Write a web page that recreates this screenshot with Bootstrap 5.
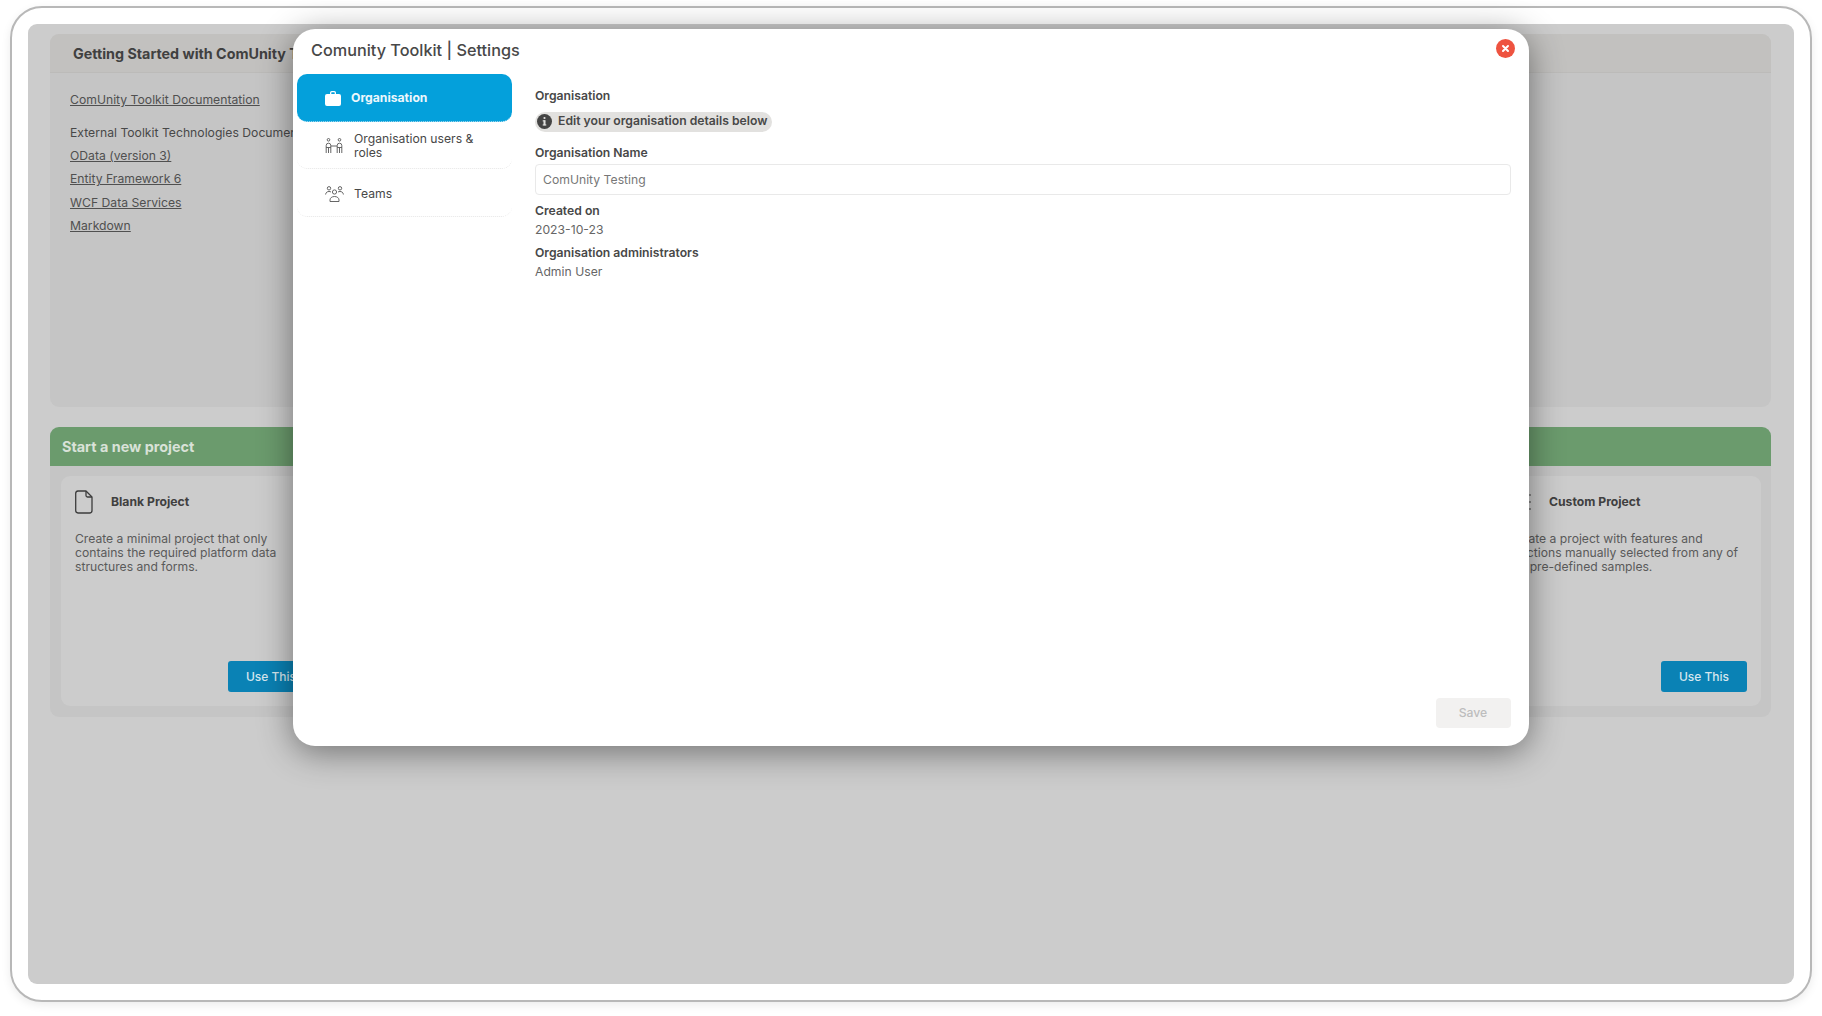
<!DOCTYPE html>
<html lang="en">
<head>
<meta charset="utf-8">
<title>Comunity Toolkit | Settings</title>
<link href="https://cdn.jsdelivr.net/npm/bootstrap@5.3.0/dist/css/bootstrap.min.css" rel="stylesheet">
<style>
html,body{height:100%;}
body{background:#fff;font-family:Inter,"Liberation Sans",sans-serif;color:#555;font-size:12.2px;overflow:hidden;}
.frame{position:relative;margin:6px 10px 0 10px;height:996px;border:2px solid #b8b8b8;border-radius:32px;padding:16px;background:#fff;box-shadow:0 3px 10px rgba(0,0,0,.08);}
.shell{background:#ccc;height:960px;border-radius:9px;padding:10px 23px 10px 22px;}
.panel{border-radius:9px;background:#c5c5c5;overflow:hidden;border:0;}
.panel-top{height:373px;}
.panel-top .phead{height:39px;background:#c2c1bf;border-bottom:1px solid #bcbbb9;padding:2px 23px 0;font-weight:700;font-size:14.3px;color:#404040;display:flex;align-items:center;}
.panel-top .pbody{padding:19px 20px 12px;}
.panel-top a{color:#505050;display:block;margin-bottom:7.4px;line-height:16px;text-decoration:underline;}
.panel-top p{color:#484848;margin:17px 0 7px;line-height:16px;}
.panel-new{height:290px;margin-top:20px;}
.panel-new .phead{height:39px;background:#6b9b6d;color:#d9e2d8;font-weight:700;font-size:14.4px;padding:0 12px;display:flex;align-items:center;}
.tiles{padding:10px 10px 10px 11px;display:flex;justify-content:space-between;}
.tile{width:267px;height:230px;background:#ccc;border-radius:9px;padding:14px;display:flex;flex-direction:column;}
.tile-head{display:flex;align-items:center;height:24px;font-weight:700;font-size:12.2px;color:#404040;}
.tile-ico{width:36px;flex:none;display:flex;}
.tile-ico.wide{width:41px;}
.tile p{margin:18px 0 0;line-height:14px;color:#5a5a5a;font-size:12.15px;}
.use-btn{background:#0a82b5;color:#d5e6ee;border:0;border-radius:3px;width:86px;height:31px;font-size:12px;font-weight:500;padding:0;}
.tile-foot{margin-top:auto;display:flex;justify-content:flex-end;}
.dialog{position:absolute;left:281px;top:21px;width:1236px;height:717px;background:#fff;border-radius:22px;box-shadow:0 6px 34px rgba(0,0,0,.45);}
.dlg-title{font-size:16.25px;font-weight:500;color:#484848;padding:10px 18px 0;height:45px;line-height:22px;}
.dlg-close{position:absolute;right:14px;top:10px;width:19px;height:19px;border-radius:50%;background:#ee5340;border:0;padding:0;display:flex;align-items:center;justify-content:center;}
.dlg-body{display:flex;}
.side{width:215px;margin-left:4px;flex:none;}
.side-item{display:flex;align-items:center;border-radius:10px;border-bottom:1px dotted #e6e6e6;color:#484848;line-height:14px;height:47.5px;padding-top:2px;}
.side-item.low{padding-top:4px;}
.side-item .sico{width:57px;padding-left:28px;flex:none;display:flex;}
.side-item .wrap-txt{width:125px;}
.side-item.on{background:#04a0db;color:#ecf7fc;font-weight:700;border-bottom-color:#bfe4f4;}
.side-item.on .sico{width:54px;padding-left:28px;}
.main{margin-left:23px;flex:1;padding-right:18.5px;padding-top:13.5px;}
.lbl{font-weight:600;color:#484848;line-height:16px;margin:0;}
.lbl-gap{margin-top:7px;}
.val{line-height:16px;color:#666;margin:3px 0 0;}
.pill{display:inline-flex;align-items:center;height:20px;background:#e2e1df;border-radius:10px;padding:0 5px 0 2px;margin:8px 0 13px;font-weight:600;color:#484848;vertical-align:top;}
.pill svg{margin-right:6px;}
.dlg-input.form-control{height:31px;border:1px solid #e9e9e9;border-radius:4px;font-size:12.2px;color:#666;padding:0 7px;margin-top:3px;margin-bottom:8px;}
.dlg-input.form-control::placeholder{color:#777;}
.save-btn{position:absolute;right:18.5px;bottom:18px;width:75px;height:30px;background:#f2f1f0;border:0;border-radius:4px;color:#bdbdbd;font-size:12.2px;font-weight:500;padding:0;}
</style>
</head>
<body>
<div class="frame">
  <div class="shell">
    <div class="panel panel-top">
      <div class="phead">Getting Started with ComUnity Toolkit</div>
      <div class="pbody">
        <a href="#">ComUnity Toolkit Documentation</a>
        <p>External Toolkit Technologies Documentation</p>
        <a href="#">OData (version 3)</a>
        <a href="#">Entity Framework 6</a>
        <a href="#">WCF Data Services</a>
        <a href="#">Markdown</a>
      </div>
    </div>
    <div class="panel panel-new">
      <div class="phead">Start a new project</div>
      <div class="tiles">
        <div class="tile">
          <div class="tile-head">
            <span class="tile-ico"><svg width="18" height="24" viewBox="0 0 18 24" fill="none" stroke="#3c3c3c" stroke-width="1.3" stroke-linejoin="round"><path d="M3 1h8l6 6v13.500a2.500 2.500 0 0 1-2.500 2.500H3A2.500 2.500 0 0 1 .7 20.500V3.500A2.500 2.500 0 0 1 3 1z"/><path d="M11 1v4.500a1.500 1.500 0 0 0 1.500 1.500H17"/></svg></span>
            Blank Project
          </div>
          <p>Create a minimal project that only contains the required platform data structures and forms.</p>
          <div class="tile-foot"><button class="use-btn" type="button">Use This</button></div>
        </div>
        <div class="tile">
          <div class="tile-head">
            <span class="tile-ico wide"><svg width="24" height="18" viewBox="0 0 24 18" fill="none" stroke="#444" stroke-width="1.200"><path d="M1 1h5v5H1zM1 11h5v5H1zM11 2h12M11 9h12M11 16h12"/></svg></span>
            Custom Project
          </div>
          <p>Create a project with features and functions manually selected from any of the pre-defined samples.</p>
          <div class="tile-foot"><button class="use-btn" type="button">Use This</button></div>
        </div>
      </div>
    </div>
  </div>

  <div class="dialog" role="dialog">
    <div class="dlg-title">Comunity Toolkit | Settings</div>
    <button class="dlg-close" type="button" aria-label="Close"><svg width="9" height="9" viewBox="0 0 9 9" stroke="#fff" stroke-width="2" stroke-linecap="round"><path d="M2 2l5 5M7 2L2 7"/></svg></button>
    <div class="dlg-body">
      <div class="side">
        <div class="side-item on">
          <span class="sico"><svg width="16" height="15" viewBox="0 0 16 15" fill="#fff"><path d="M5 3V1.800A1.800 1.800 0 0 1 6.800 0h2.400A1.800 1.800 0 0 1 11 1.800V3h3a2 2 0 0 1 2 2v8a2 2 0 0 1-2 2H2a2 2 0 0 1-2-2V5a2 2 0 0 1 2-2zm1.300 0h3.400V1.800a.5.500 0 0 0-.5-.5H6.800a.5.500 0 0 0-.5.5z"/></svg></span>
          Organisation
        </div>
        <div class="side-item">
          <span class="sico"><svg width="18" height="16" viewBox="0 0 18 16" fill="none" stroke="#555" stroke-width=".9"><circle cx="3.500" cy="1.800" r="1.300"/><circle cx="14.500" cy="1.800" r="1.300"/><path d="M1.200 15V7.500a2.300 2.300 0 0 1 4.600 0V15M3.500 10v5M16.800 15V7.500a2.300 2.300 0 0 0-4.600 0V15M14.500 10v5M5.800 8h6.400M1.200 9.500h4.600M12.200 9.500h4.600"/></svg></span>
          <span class="wrap-txt">Organisation users &amp; roles</span>
        </div>
        <div class="side-item low">
          <span class="sico"><svg width="19" height="16" viewBox="0 0 19 16" fill="none" stroke="#555" stroke-width=".9"><circle cx="4" cy="2.300" r="1.700"/><circle cx="15" cy="2.300" r="1.700"/><circle cx="9.500" cy="6" r="2.100"/><path d="M.6 8.500C.9 6.300 2.300 5.500 4 5.500c.8 0 1.400.1 2 .5M18.400 8.500c-.3-2.200-1.700-3-3.400-3-.8 0-1.400.1-2 .5M5 15.500v-1.500c0-2 1.800-3.500 4.500-3.500S14 12 14 14v1.500z"/></svg></span>
          Teams
        </div>
      </div>
      <div class="main">
        <p class="lbl">Organisation</p>
        <span class="pill"><svg width="15" height="15" viewBox="0 0 15 15"><circle cx="7.500" cy="7.500" r="7.500" fill="#444"/><rect x="6.500" y="6.300" width="2" height="5" fill="#e2e1df"/><rect x="5.700" y="6.300" width="2.500" height="1.100" fill="#e2e1df"/><rect x="5.700" y="10.400" width="3.600" height="1.100" fill="#e2e1df"/><circle cx="7.500" cy="4" r="1.100" fill="#e2e1df"/></svg>Edit your organisation details below</span>
        <p class="lbl">Organisation Name</p>
        <input class="form-control dlg-input" type="text" placeholder="ComUnity Testing">
        <p class="lbl">Created on</p>
        <p class="val">2023-10-23</p>
        <p class="lbl lbl-gap">Organisation administrators</p>
        <p class="val">Admin User</p>
      </div>
    </div>
    <button class="save-btn" type="button" disabled>Save</button>
  </div>
</div>
<script src="https://cdn.jsdelivr.net/npm/bootstrap@5.3.0/dist/js/bootstrap.bundle.min.js"></script>
</body>
</html>
